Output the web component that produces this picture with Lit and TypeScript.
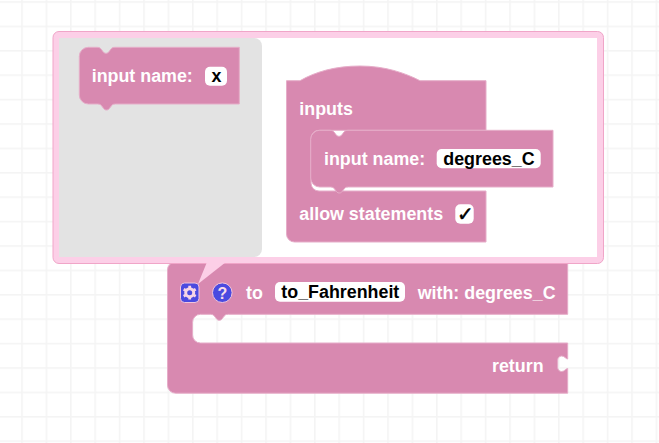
import { LitElement, html, svg, css } from "lit";
import { customElement } from "lit/decorators.js";

const tab = "c3 0 3.5 1 5 3 c1.5 2 2 3 4 3 c2 0 2.5 -1 4 -3 c1.5 -2 2 -3 5 -3";
const tabBack = "c-3 0 -3.5 1 -5 3 c-1.5 2 -2 3 -4 3 c-2 0 -2.5 -1 -4 -3 c-1.5 -2 -2 -3 -5 -3";
const socket = "c-2 0 -3 -3 -6 -3 c-2.5 0 -4 2 -4 4 v7.5 c0 2 1.5 4 4 4 c3 0 4 -3 6 -3";

const MAIN = `M175.5 262 H567.7 V314.3 H228.3 ${tabBack} H200.5 a8 8 0 0 0 -8 8 v12.7 a8 8 0 0 0 8 8 H567.7 V359 ${socket} V393.2 H175.5 a8 8 0 0 1 -8 -8 V270 a8 8 0 0 1 8 -8 Z`;
const FLY = `M88.3 47.3 H97 ${tab} H239.3 V104 H115.5 ${tabBack} H88.3 a9 9 0 0 1 -9 -9 V56.3 a9 9 0 0 1 9 -9 Z`;
const HAT = `M286.5 80.7 H300 C315 72 335 66 360 66 C385 66 405 73 420 80.7 H486 V130.3 H319 a8 8 0 0 0 -8 8 V183 a8 8 0 0 0 8 8 H486 V242 H294.5 a8 8 0 0 1 -8 -8 Z`;
const INNER = `M319.7 130.3 H330 ${tab} H553 V187 H348.3 ${tabBack} H319.7 a9 9 0 0 1 -9 -9 V139.3 a9 9 0 0 1 9 -9 Z`;

@customElement("app-root")
export class AppRoot extends LitElement {
  static styles = css`
    :host { display: block; width: 659px; height: 443px; overflow: hidden; background: #fff; }
    svg { display: block; }
    .grid { fill: #f4f4f4; }
    .block { fill: #d889b0; stroke: #e6adc9; stroke-width: 1; }
    .bubble { fill: #fccfe7; stroke: #f0a5c8; stroke-width: 1; }
    .tail { fill: #fccfe7; }
    .inner { fill: #fff; }
    .fly { fill: #e3e3e3; }
    .field { fill: #fff; }
    text { font: bold 17.85px "Liberation Sans", Arial, sans-serif; }
    .lbl { fill: #fff; }
    .val { fill: #000; }
    .icon { fill: #4a4ae0; stroke: #f0c4dc; stroke-width: 1; }
    .gear-ring { fill: none; stroke: #f6d5e6; stroke-width: 3; }
    .gear-teeth { fill: none; stroke: #f6d5e6; stroke-width: 2.8; }
    .q { fill: #f6dcea; font-size: 16px; }
    .check { font-family: "DejaVu Sans", sans-serif; font-size: 20px; stroke: #000; stroke-width: 0.5; }
  `;

  field(x: number, y: number, w: number, h: number, text: string, tx: number, by: number) {
    return svg`<rect class="field" x=${x} y=${y} width=${w} height=${h} rx="5"></rect>
      <text class="val" x=${tx} y=${by}>${text}</text>`;
  }

  render() {
    return html`<svg width="659" height="443" viewBox="0 0 659 443">
      <defs>
        <pattern id="g" width="24.4" height="24.4" patternUnits="userSpaceOnUse" patternTransform="translate(21.2 1.2)">
          <rect class="grid" width="24.4" height="1.6"></rect>
          <rect class="grid" width="1.6" height="24.4"></rect>
        </pattern>
      </defs>
      <rect width="659" height="443" fill="url(#g)"></rect>

      <path class="block" d=${MAIN}></path>
      <text class="lbl" x="246" y="298.5">to</text>
      ${this.field(275, 282, 130, 19.7, "to_Fahrenheit", 281.3, 298)}
      <text class="lbl" x="417.7" y="298.5">with: degrees_C</text>
      <text class="lbl" x="492" y="371.5">return</text>

      <rect class="bubble" x="53" y="31.5" width="550.5" height="232" rx="6"></rect>
      <polygon class="tail" points="198,284 207,262 226,262"></polygon>
      <rect class="inner" x="59" y="38" width="538" height="219"></rect>
      <path class="fly" d="M59 38 H254 a8 8 0 0 1 8 8 V249 a8 8 0 0 1 -8 8 H59 Z"></path>

      <path class="block" d=${FLY}></path>
      <text class="lbl" x="91.7" y="82">input name:</text>
      ${this.field(205, 66.7, 22, 19, "x", 211.5, 81.5)}

      <path class="block" d=${HAT}></path>
      <text class="lbl" x="299.3" y="115">inputs</text>
      <path class="block" d=${INNER}></path>
      <text class="lbl" x="324" y="165">input name:</text>
      ${this.field(436.7, 149, 104, 19.3, "degrees_C", 443.3, 164.5)}
      <text class="lbl" x="299.3" y="220">allow statements</text>
      <rect class="field" x="455.3" y="204.3" width="18.4" height="19.4" rx="5"></rect>
      <text class="val check" x="457" y="220.5">✓</text>

      <rect class="icon" x="180.5" y="283" width="18.5" height="19.5" rx="4"></rect>
      <circle class="gear-ring" cx="189.7" cy="292.7" r="4"></circle>
      <path class="gear-teeth" d="M189.7 285.8 V288 M189.7 297.4 V299.6 M183.7 289.2 L185.6 290.3 M193.8 295.1 L195.7 296.2 M183.7 296.2 L185.6 295.1 M193.8 290.3 L195.7 289.2"></path>
      <circle class="icon" cx="222.3" cy="292.7" r="9.8"></circle>
      <text class="q" x="222.3" y="298.5" text-anchor="middle">?</text>
    </svg>`;
  }
}
